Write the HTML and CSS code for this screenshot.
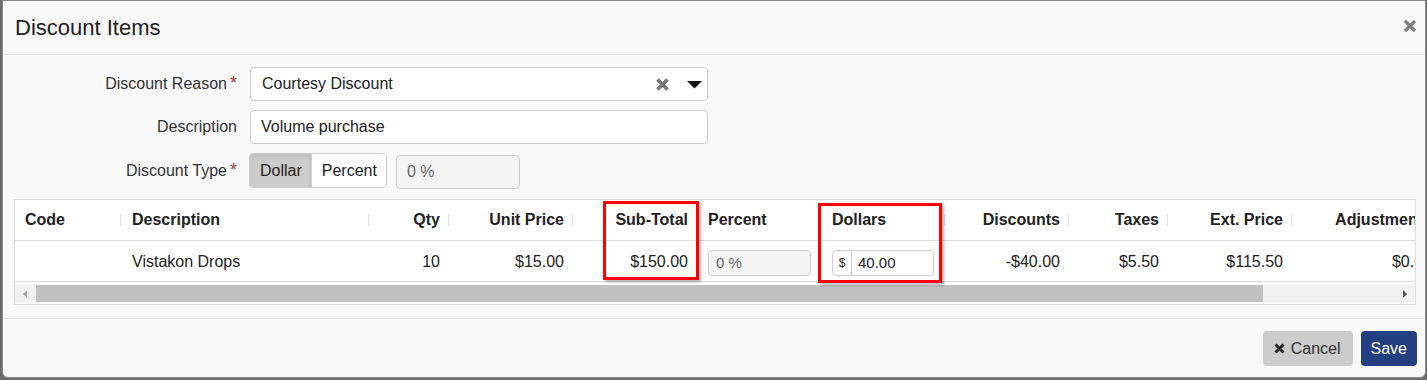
FILE: index.html
```html
<!DOCTYPE html>
<html lang="en">
<head>
    <meta charset="UTF-8">
    <meta name="viewport" content="width=device-width, initial-scale=1.0">
    <title>Discount Items</title>
    <link rel="stylesheet" href="styles.css">
</head>
<body>
    <div class="modal">
        <div class="modal-header">
            <h4 class="modal-title">Discount Items</h4>
            <button class="close-btn" title="Close">
                <svg width="14" height="14" viewBox="0 0 14 14"><path d="M2 2 L12 12 M12 2 L2 12" stroke="#808080" stroke-width="3.2"/></svg>
            </button>
        </div>

        <div class="modal-body">
            <div class="form">
                <label class="form-label">Discount Reason<span class="req">*</span></label>
                <div class="select">
                    <span class="select-text">Courtesy Discount</span>
                    <svg class="select-clear" width="15" height="15" viewBox="0 0 15 15"><path d="M2.5 2.5 L12.5 12.5 M12.5 2.5 L2.5 12.5" stroke="#777" stroke-width="3.6"/></svg>
                    <svg class="select-caret" width="15" height="8" viewBox="0 0 15 8"><polygon points="0,0 15,0 7.5,7.5" fill="#111"/></svg>
                </div>

                <label class="form-label">Description</label>
                <div class="text-input">Volume purchase</div>

                <label class="form-label">Discount Type<span class="req">*</span></label>
                <div class="type-row">
                    <div class="btn-group">
                        <span class="toggle active">Dollar</span>
                        <span class="toggle">Percent</span>
                    </div>
                    <div class="percent-input">0 %</div>
                </div>
            </div>

            <div class="grid">
                <div class="grid-view">
                    <table>
                        <colgroup>
                            <col style="width:107px"><col style="width:248px"><col style="width:80px">
                            <col style="width:124px"><col style="width:124px"><col style="width:124px">
                            <col style="width:124px"><col style="width:124px"><col style="width:99px">
                            <col style="width:124px"><col style="width:149px">
                        </colgroup>
                        <thead>
                            <tr>
                                <th>Code</th>
                                <th>Description</th>
                                <th class="num">Qty</th>
                                <th class="num">Unit Price</th>
                                <th class="num">Sub-Total</th>
                                <th>Percent</th>
                                <th>Dollars</th>
                                <th class="num">Discounts</th>
                                <th class="num">Taxes</th>
                                <th class="num">Ext. Price</th>
                                <th class="num">Adjustments</th>
                            </tr>
                        </thead>
                        <tbody>
                            <tr>
                                <td></td>
                                <td>Vistakon Drops</td>
                                <td class="num">10</td>
                                <td class="num">$15.00</td>
                                <td class="num">$150.00</td>
                                <td><div class="cell-input disabled">0 %</div></td>
                                <td>
                                    <div class="cell-input money">
                                        <span class="addon">$</span>
                                        <span class="money-value">40.00</span>
                                    </div>
                                </td>
                                <td class="num">-$40.00</td>
                                <td class="num">$5.50</td>
                                <td class="num">$115.50</td>
                                <td class="num">$0.00</td>
                            </tr>
                        </tbody>
                    </table>
                </div>

                <div class="hscroll">
                    <span class="scroll-btn"><span class="arrow-left"></span></span>
                    <div class="scroll-track"><div class="scroll-thumb"></div></div>
                    <span class="scroll-btn"><span class="arrow-right"></span></span>
                </div>

                <!-- highlight marks drawn over the grid -->
                <div class="mark mark-subtotal"></div>
                <div class="mark mark-dollars"></div>
            </div>
        </div>

        <div class="modal-footer">
            <button class="btn btn-cancel">
                <svg width="11" height="11" viewBox="0 0 11 11"><path d="M1.5 1.5 L9.5 9.5 M9.5 1.5 L1.5 9.5" stroke="#222" stroke-width="3"/></svg>
                Cancel
            </button>
            <button class="btn btn-save">Save</button>
        </div>
    </div>
</body>
</html>
```

FILE: styles.css
```css
body {
    margin: 0;
    height: 380px;
    overflow: hidden;
    background-color: #6b6b6b;
    font-family: 'Liberation Sans', Arial, sans-serif;
    font-size: 16px;
    color: #222;
}
.modal {
    box-sizing: border-box;
    margin-left: 2px;
    width: 1424px;
    height: 378px;
    background: #f9f9f9;
    border: 1px solid #8c8c8c;
    border-radius: 0 0 6px 6px;
}
.modal-header {
    display: flex;
    align-items: center;
    justify-content: space-between;
    height: 53px;
    padding: 0 8px 0 12px;
    border-bottom: 1px solid #e3e3e3;
}
.modal-title {
    margin: 0;
    font-size: 22px;
    font-weight: normal;
    color: #222;
}
.close-btn {
    display: flex;
    padding: 0;
    border: none;
    background: none;
    margin-top: -3px;
}
.modal-body {
    padding: 12px 9px 0 11px;
}
.form {
    display: grid;
    grid-template-columns: 223px 458px;
    column-gap: 13px;
    row-gap: 9px;
    align-items: center;
}
.form-label {
    display: flex;
    justify-content: flex-end;
    align-items: flex-start;
    color: #333;
}
.req {
    color: #a0413e;
    font-size: 18px;
    margin-left: 3px;
    line-height: 16px;
}
.select,
.text-input {
    box-sizing: border-box;
    height: 34px;
    display: flex;
    align-items: center;
    background: #fff;
    border: 1px solid #ccc;
    border-radius: 4px;
    padding: 0 5px 0 11px;
}
.select-text {
    flex: 1;
}
.select-clear {
    margin-right: 17px;
}
.select-caret {
    margin-top: 1px;
}
.text-input {
    padding-left: 10px;
}
.type-row {
    display: flex;
    gap: 9px;
    align-items: flex-start;
}
.btn-group {
    display: flex;
    height: 35px;
    box-sizing: border-box;
    border: 1px solid #ccc;
    border-radius: 4px;
    overflow: hidden;
    margin-left: -1px;
}
.toggle {
    display: flex;
    align-items: center;
    padding: 0 9px 0 10px;
    background: #fff;
}
.toggle.active {
    background: #ccc;
    box-shadow: inset 0 2px 4px rgba(0,0,0,0.08);
}
.toggle + .toggle {
    border-left: 1px solid #ccc;
}
.percent-input {
    box-sizing: border-box;
    width: 124px;
    height: 34px;
    margin-top: 2px;
    display: flex;
    align-items: center;
    padding-left: 10px;
    background: #f4f4f4;
    border: 1px solid #ccc;
    border-radius: 4px;
    color: #666;
}
.grid {
    position: relative;
    margin-top: 10px;
    background: #fff;
    border: 1px solid #ddd;
}
.grid-view {
    overflow: hidden;
}
table {
    width: 1427px;
    table-layout: fixed;
    border-collapse: collapse;
}
th,
td {
    padding: 0 10px;
    text-align: left;
    white-space: nowrap;
    border-bottom: 1px solid #ddd;
}
th {
    height: 40px;
    font-weight: bold;
    background: linear-gradient(#e2e2e2, #e2e2e2) no-repeat right 1px center / 1px 12px;
}
td {
    height: 39px;
    padding-top: 1px;
}
.num {
    text-align: right;
}
.cell-input {
    box-sizing: border-box;
    width: 103px;
    height: 26px;
    display: flex;
    align-items: center;
    border: 1px solid #ccc;
    border-radius: 4px;
    font-size: 15px;
    margin-top: 2px;
}
.cell-input.disabled {
    background: #f4f4f4;
    color: #666;
    padding-left: 7px;
}
.cell-input.money {
    width: 102px;
    background: #fff;
}
.addon {
    align-self: stretch;
    display: flex;
    align-items: center;
    width: 18px;
    justify-content: center;
    font-size: 12px;
    border-right: 1px solid #ccc;
}
.money-value {
    padding-left: 6px;
}
.hscroll {
    display: flex;
    height: 17px;
    margin: 3px 0 2px;
    background: #f0f0f0;
}
.scroll-btn {
    width: 20px;
    display: flex;
    align-items: center;
    justify-content: center;
}
.arrow-left {
    border-top: 4px solid transparent;
    border-bottom: 4px solid transparent;
    border-right: 4px solid #a3a3a3;
}
.arrow-right {
    border-top: 4px solid transparent;
    border-bottom: 4px solid transparent;
    border-left: 4px solid #505050;
}
.scroll-track {
    flex: 1;
}
.scroll-thumb {
    width: 1227px;
    height: 100%;
    margin-left: 1px;
    background: #c1c1c1;
}
.mark {
    position: absolute;
    box-sizing: border-box;
    border: 3px solid #f00;
    box-shadow: 2px 2px 3px rgba(0,0,0,0.3);
}
.mark-subtotal {
    left: 588px;
    top: 1px;
    width: 96px;
    height: 79px;
}
.mark-dollars {
    left: 803px;
    top: 3px;
    width: 124px;
    height: 80px;
}
.modal-footer {
    display: flex;
    justify-content: flex-end;
    gap: 8px;
    margin-top: 13px;
    padding: 12px 8px 0 0;
    border-top: 1px solid #e3e3e3;
}
.btn {
    display: flex;
    align-items: center;
    gap: 6px;
    height: 35px;
    padding: 0 10px;
    border: none;
    border-radius: 4px;
    font-family: inherit;
    font-size: 16px;
    cursor: pointer;
}
.btn-cancel {
    background: #ccc;
    color: #333;
    padding: 0 12px 0 11px;
}
.btn-save {
    background: #243f7f;
    color: #fff;
}
```
